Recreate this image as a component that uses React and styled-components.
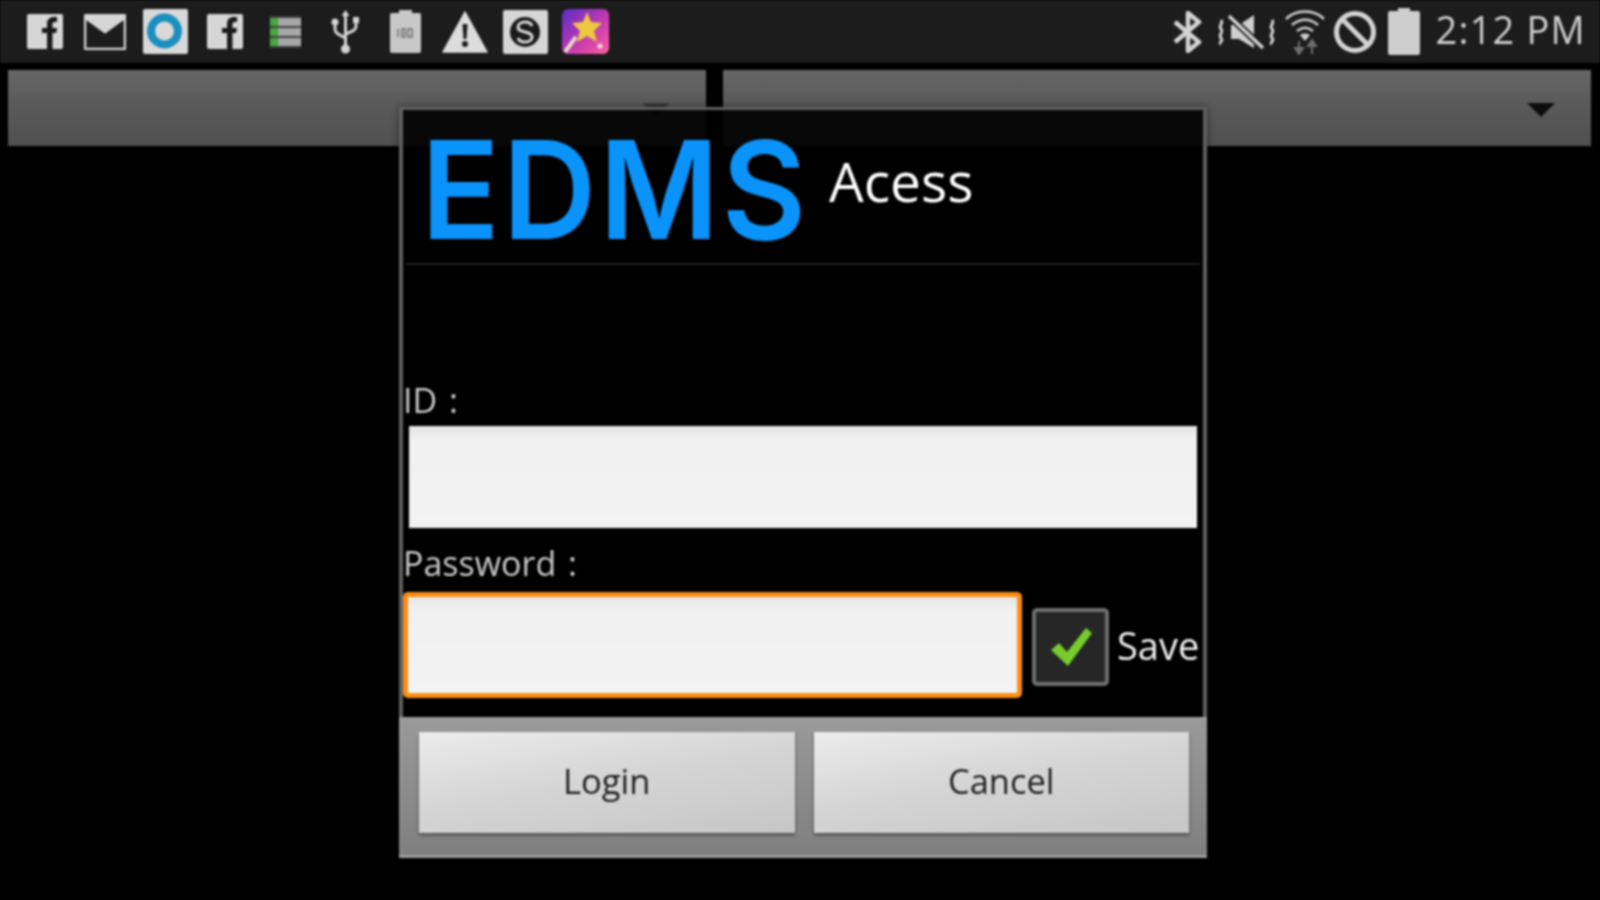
import React from "react";
import styled, { createGlobalStyle } from "styled-components";

const Global = createGlobalStyle`
  html, body { margin: 0; padding: 0; background: #000; }
  body { font-family: "Open Sans", "Noto Sans", sans-serif; }
  #root { width: 1600px; height: 900px; overflow: hidden; }
`;

const Screen = styled.div`
  position: relative;
  width: 1600px;
  height: 900px;
  background: #000;
  filter: blur(1px);
`;

const StatusBar = styled.header`
  display: flex;
  align-items: center;
  justify-content: space-between;
  height: 63px;
  padding: 0 14px 0 15px;
  box-sizing: border-box;
  background: #1c1c1c;
`;

const IconGroup = styled.div`
  display: flex;
  align-items: center;
`;

const NotifyCell = styled.div`
  display: flex;
  align-items: center;
  justify-content: center;
  width: 60px;
  height: 63px;
`;

const SystemCell = styled.div`
  display: flex;
  align-items: center;
  justify-content: center;
  width: ${(p) => p.$w}px;
  height: 63px;
  margin-right: ${(p) => p.$gap || 0}px;
`;

const Clock = styled.span`
  margin-left: 16px;
  padding-bottom: 4px;
  font-size: 38px;
  letter-spacing: 1.2px;
  line-height: 59px;
  color: #cdcdcd;
  white-space: nowrap;
`;

const SpinnerRow = styled.div`
  display: flex;
  gap: 17px;
  height: 76px;
  margin-top: 7px;
  padding: 0 9px 0 8px;
`;

const Spinner = styled.div`
  flex: 0 0 ${(p) => p.$w}px;
  display: flex;
  align-items: center;
  justify-content: flex-end;
  padding: 3px 36px 0 0;
  box-sizing: border-box;
  background: linear-gradient(180deg, #666 0%, #5a5a5a 45%, #505050 100%);
`;

const SpinnerArrow = styled.span`
  width: 0;
  height: 0;
  border-left: 14px solid transparent;
  border-right: 14px solid transparent;
  border-top: 14px solid ${(p) => p.$color};
`;

const Dialog = styled.section`
  position: absolute;
  left: 399px;
  top: 107px;
  width: 808px;
  height: 751px;
  box-sizing: border-box;
  display: flex;
  flex-direction: column;
  background: rgba(0, 0, 0, 0.9);
  border: solid #5f5f5f;
  border-width: 3px 4px 0;
  box-shadow: 0 0 8px rgba(0, 0, 0, 0.45);
`;

const DialogHeader = styled.div`
  display: flex;
  align-items: flex-start;
  height: 155px;
  margin: 0 3px;
  box-sizing: border-box;
  border-bottom: 2px solid #1f1f1f;
`;

const Logo = styled.span`
  display: block;
  width: 408px;
  margin: 4px 0 0 15px;
  font-family: "Inter", sans-serif;
  font-size: 136px;
  font-weight: 600;
  line-height: 152px;
  letter-spacing: 3px;
  color: #0a94fb;
  transform: scaleX(0.955);
  transform-origin: left center;
  white-space: nowrap;
`;

const DialogTitle = styled.span`
  margin: 35px 0 0 0;
  font-size: 55px;
  line-height: 72px;
  color: #fff;
`;

const Form = styled.div`
  flex: 1;
  display: flex;
  flex-direction: column;
  justify-content: flex-end;
  padding-bottom: 19px;
`;

const FieldLabel = styled.label`
  display: block;
  padding: ${(p) => p.$top}px 0 ${(p) => p.$bottom}px;
  font-size: 34px;
  word-spacing: 3px;
  line-height: 46px;
  height: 46px;
  color: #c9c9c9;
`;

const TextField = styled.div`
  height: 102px;
  margin: 0 6px;
  background: linear-gradient(180deg, #e4e4e4 0, #f1f1f1 14px, #f3f3f3 100%);
`;

const PasswordRow = styled.div`
  display: flex;
  align-items: center;
  height: 106px;
`;

const PasswordField = styled.div`
  width: 619px;
  height: 106px;
  box-sizing: border-box;
  border: 5px solid #fb8d14;
  border-radius: 5px;
  background: linear-gradient(180deg, #e6e6e6 0, #f1f1f1 14px, #f3f3f3 100%);
`;

const Check = styled.div`
  display: flex;
  align-items: center;
  justify-content: center;
  width: 77px;
  height: 78px;
  margin: 3px 0 0 10px;
  box-sizing: border-box;
  border: 4px solid #6f6f6f;
  border-radius: 5px;
  background: #262626;
`;

const SaveLabel = styled.span`
  margin-left: 8px;
  font-size: 38px;
  line-height: 50px;
  color: #f0f0f0;
  white-space: nowrap;
`;

const ButtonBar = styled.footer`
  display: flex;
  gap: 19px;
  height: 141px;
  margin: 0 -4px;
  padding: 15px 18px 0 20px;
  box-sizing: border-box;
  background: linear-gradient(180deg, #9a9a9a 0%, #8a8a8a 60%, #7f7f7f 100%);
  border-bottom: 3px solid #9a9a9a;
`;

const DialogButton = styled.button`
  flex: 1;
  height: 101px;
  padding: 0 0 4px;
  border: 0;
  background: linear-gradient(170deg, #ececec 0%, #d6d6d6 45%, #c6c6c6 100%);
  box-shadow: 0 2px 3px rgba(0, 0, 0, 0.45);
  font-family: "Open Sans", "Noto Sans", sans-serif;
  font-size: 34.500px;
  color: #222;
`;

const F = ({ w = 38, h = 37 }) => (
  <svg width={w} height={h} viewBox="0 0 38 37">
    <rect x="1" y="1" width="36" height="35" rx="2" fill="#d6d6d6" />
    <path d="M21 36V20h-5v-5h5v-4c0-5 3-7 6.500-7H31v5h-2.500c-1.500 0-2 .7-2 2v4H31l-.8 5h-3.700V36z" fill="#1a1a1a" />
  </svg>
);

const Mail = () => (
  <svg width="42" height="36" viewBox="0 0 42 36">
    <rect x="1" y="1" width="40" height="34" rx="1" fill="#1c1c1c" stroke="#d6d6d6" strokeWidth="2.500" />
    <path d="M2 2h38v4L21 20 2 6z" fill="#d6d6d6" />
    <path d="M3 8l18 13L39 8" fill="none" stroke="#1c1c1c" strokeWidth="2" />
  </svg>
);

const Ring = () => (
  <svg width="45" height="45" viewBox="0 0 45 45">
    <rect width="45" height="45" rx="2" fill="#d9d9d9" />
    <circle cx="21.500" cy="22" r="13.500" fill="none" stroke="#1a8fbf" strokeWidth="8" />
  </svg>
);

const Stack = () => (
  <svg width="31" height="32" viewBox="0 0 31 32">
    <rect width="31" height="32" fill="#3f3f3f" />
    {[2, 12, 22].map((y) => (
      <g key={y}>
        <rect x="0" y={y} width="31" height="8" fill="#a6a6a6" />
        <rect x="0" y={y} width="8" height="8" fill="#46a83c" />
      </g>
    ))}
  </svg>
);

const Usb = () => (
  <svg width="31" height="44" viewBox="0 0 31 44">
    <path d="M15.500 3v34M5 13v6c0 4 3 5 10.500 9M26 11v5c0 4-3 5-10.500 8" fill="none" stroke="#d4d4d4" strokeWidth="3" />
    <path d="M15.500 0l4 6h-8z" fill="#d4d4d4" />
    <circle cx="5" cy="12" r="3.500" fill="#d4d4d4" />
    <rect x="23" y="7" width="6" height="6" fill="#d4d4d4" />
    <circle cx="15.500" cy="39" r="4.500" fill="#d4d4d4" />
  </svg>
);

const BatteryNote = () => (
  <svg width="31" height="43" viewBox="0 0 31 43">
    <path d="M9 0h13v3h7a2 2 0 0 1 2 2v36a2 2 0 0 1-2 2H2a2 2 0 0 1-2-2V5a2 2 0 0 1 2-2h7z" fill="#c8c8c8" />
    <path d="M8 19v8M12 19h3v8h-3zM18 19h4v8h-4z" fill="none" stroke="#6e6e6e" strokeWidth="1.500" />
  </svg>
);

const Warning = () => (
  <svg width="46" height="42" viewBox="0 0 46 42">
    <path d="M23 1L45 41H1z" fill="#dcdcdc" stroke="#dcdcdc" strokeWidth="1.500" strokeLinejoin="round" />
    <path d="M20.500 13h5l-1 15h-3z" fill="#1c1c1c" />
    <circle cx="23" cy="33" r="3" fill="#1c1c1c" />
  </svg>
);

const Skype = () => (
  <svg width="45" height="44" viewBox="0 0 45 44">
    <rect width="45" height="44" rx="2" fill="#d6d6d6" />
    <circle cx="22" cy="22" r="15" fill="#1a1a1a" />
    <path d="M29 16c-1-3-4-4-7-4-4 0-7 2-7 5 0 7 14 3 14 10 0 3-3 5-7 5-3 0-6-1-7-4" fill="none" stroke="#d6d6d6" strokeWidth="3" />
  </svg>
);

const Star = () => (
  <svg width="47" height="45" viewBox="0 0 47 45">
    <defs>
      <linearGradient id="starBg" x1="0" y1="0" x2="1" y2="1">
        <stop offset="0" stopColor="#5a2cc4" />
        <stop offset="0.55" stopColor="#c23ab0" />
        <stop offset="1" stopColor="#ff5fa0" />
      </linearGradient>
    </defs>
    <rect width="47" height="45" rx="6" fill="url(#starBg)" />
    <path d="M25 3l4 10 11 1-8 8 3 11-10-6-10 6 3-11-8-8 11-1z" fill="#ecc93f" />
    <path d="M14 28L3 43" stroke="#e8d8c8" strokeWidth="4" />
    <circle cx="38" cy="37" r="2.500" fill="#ffd9ea" />
  </svg>
);

const Bluetooth = () => (
  <svg width="30" height="42" viewBox="0 0 30 42">
    <path d="M2 11l24 20-11 9V2l11 9L2 31" fill="none" stroke="#d4d4d4" strokeWidth="4.500" strokeLinejoin="round" />
  </svg>
);

const Mute = () => (
  <svg width="60" height="36" viewBox="0 0 60 36">
    <path d="M14 11h8L37 1v33L22 25h-8z" fill="#cfcfcf" />
    <path d="M12 2l34 32" stroke="#1c1c1c" strokeWidth="7" />
    <path d="M12 2l34 32" stroke="#d4d4d4" strokeWidth="3.500" />
    <path d="M4 6c3 3-3 6 0 9s-3 6 0 9-3 5 0 6M55 6c3 3-3 6 0 9s-3 6 0 9-3 5 0 6" fill="none" stroke="#cfcfcf" strokeWidth="3" />
  </svg>
);

const Wifi = () => (
  <svg width="42" height="47" viewBox="0 0 42 47">
    <g fill="none" stroke="#cfcfcf" strokeWidth="2.500">
      <path d="M2 11C12 1 30 1 40 11" />
      <path d="M8 17c8-7 18-7 26 0" />
      <path d="M13 23c5-4 11-4 16 0" />
    </g>
    <path d="M21 33l-5-6c3-2 7-2 10 0z" fill="#cfcfcf" />
    <path d="M15 33v9M11 40l4 6 4-6z" fill="#6e6e6e" stroke="#6e6e6e" strokeWidth="2" />
    <path d="M28 46v-9M24 38l4-6 4 6z" fill="#6e6e6e" stroke="#6e6e6e" strokeWidth="2" />
  </svg>
);

const Block = () => (
  <svg width="44" height="44" viewBox="0 0 44 44">
    <circle cx="22" cy="22" r="18.500" fill="none" stroke="#d4d4d4" strokeWidth="5" />
    <path d="M9 9l26 26" stroke="#d4d4d4" strokeWidth="5" />
  </svg>
);

const Battery = () => (
  <svg width="32" height="47" viewBox="0 0 32 47">
    <path d="M10 0h12v3h8a2 2 0 0 1 2 2v40a2 2 0 0 1-2 2H2a2 2 0 0 1-2-2V5a2 2 0 0 1 2-2h8z" fill="#cecece" />
  </svg>
);

const CheckMark = () => (
  <svg width="46" height="42" viewBox="0 0 46 42">
    <path d="M3 24l8-7 8 9L38 2l6 5-24 33z" fill="#76cc2c" />
  </svg>
);

const notifications = [F, Mail, Ring, F, Stack, Usb, BatteryNote, Warning, Skype, Star];

export default function App() {
  return (
    <Screen>
      <Global />
      <StatusBar>
        <IconGroup>
          {notifications.map((Icon, i) => (
            <NotifyCell key={i}>
              <Icon />
            </NotifyCell>
          ))}
        </IconGroup>
        <IconGroup>
          <SystemCell $w={30} $gap={14}><Bluetooth /></SystemCell>
          <SystemCell $w={60} $gap={7}><Mute /></SystemCell>
          <SystemCell $w={42} $gap={7}><Wifi /></SystemCell>
          <SystemCell $w={44} $gap={11}><Block /></SystemCell>
          <SystemCell $w={32}><Battery /></SystemCell>
          <Clock>2:12 PM</Clock>
        </IconGroup>
      </StatusBar>
      <SpinnerRow>
        <Spinner $w={698}><SpinnerArrow $color="#3a3a3a" /></Spinner>
        <Spinner $w={868}><SpinnerArrow $color="#0c0c0c" /></Spinner>
      </SpinnerRow>
      <Dialog>
        <DialogHeader>
          <Logo>EDMS</Logo>
          <DialogTitle>Acess</DialogTitle>
        </DialogHeader>
        <Form>
          <FieldLabel $top={0} $bottom={3}>ID :</FieldLabel>
          <TextField />
          <FieldLabel $top={12} $bottom={6}>Password :</FieldLabel>
          <PasswordRow>
            <PasswordField />
            <Check><CheckMark /></Check>
            <SaveLabel>Save</SaveLabel>
          </PasswordRow>
        </Form>
        <ButtonBar>
          <DialogButton>Login</DialogButton>
          <DialogButton>Cancel</DialogButton>
        </ButtonBar>
      </Dialog>
    </Screen>
  );
}
